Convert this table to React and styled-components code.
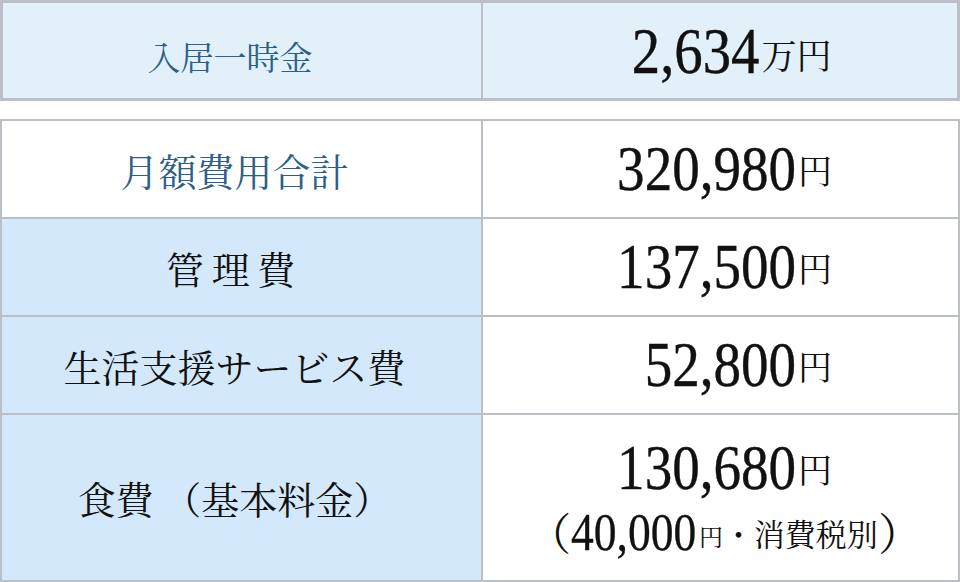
import React from "react";
import styled, { createGlobalStyle } from "styled-components";

const GlobalStyle = createGlobalStyle`
  html, body { margin: 0; padding: 0; background: #ffffff; }
  body {
    font-family: "Liberation Serif", "Noto Serif CJK JP", "Noto Sans CJK JP", serif;
    color: #111111;
  }
`;

const SERIF = `"Liberation Serif", "Times New Roman", "DejaVu Serif", serif`;
const CJK = `"Noto Serif CJK JP", "Noto Sans CJK JP", serif`;

const Page = styled.div`
  width: 960px;
  display: flex;
  flex-direction: column;
  gap: 18px;
`;

const Table = styled.div`
  display: grid;
  grid-template-columns: ${(p) => p.$left}px 1fr;
  gap: 2px;
  padding: ${(p) => p.$frame}px;
  background: #bbbfc6;
`;

const Label = styled.div`
  height: ${(p) => p.$h}px;
  box-sizing: border-box;
  display: flex;
  align-items: center;
  justify-content: center;
  padding: ${(p) => p.$pt || 0}px ${(p) => p.$pr || 14}px 0 0;
  background: ${(p) => p.$bg};
  color: ${(p) => (p.$blue ? "#2d6089" : "#111111")};
  font-family: ${CJK};
  font-size: ${(p) => p.$size || 38}px;
  letter-spacing: ${(p) => p.$ls || 0}em;
  white-space: pre;
`;

const Value = styled.div`
  height: ${(p) => p.$h}px;
  box-sizing: border-box;
  display: flex;
  flex-direction: column;
  align-items: center;
  justify-content: center;
  gap: ${(p) => p.$gap || 0}px;
  background: ${(p) => p.$bg};
`;

const Amount = styled.div`
  width: 223px;
  display: flex;
  justify-content: flex-end;
  align-items: baseline;
  line-height: 1;
  white-space: nowrap;
`;

const Num = styled.span`
  display: inline-block;
  font-family: ${SERIF};
  font-size: ${(p) => p.$size || 64}px;
  -webkit-text-stroke: 0.4px #111111;
  transform: scaleX(0.86);
  transform-origin: right bottom;
  margin-right: 2px;
`;

const Unit = styled.span`
  font-family: ${CJK};
  font-size: ${(p) => p.$size || 34}px;
  position: relative;
  top: ${(p) => -(p.$lift ?? 6)}px;
`;

const Note = styled.div`
  line-height: 1;
  white-space: nowrap;
  display: flex;
  align-items: baseline;
  margin-left: 8px;
`;

const Paren = styled.span`
  font-family: ${CJK};
  font-size: 44px;
`;

const NoteNum = styled.span`
  display: inline-block;
  font-family: ${SERIF};
  font-size: 53px;
  -webkit-text-stroke: 0.3px #111111;
  transform: scaleX(0.86);
  transform-origin: left bottom;
  margin-right: -18px;
`;

const NoteText = styled.span`
  font-family: ${CJK};
  font-size: ${(p) => p.$size}px;
  position: relative;
  top: -4px;
`;

const TOP = "#e2f0fa";
const BLUE = "#d3e9fb";
const WHITE = "#ffffff";

const rows = [
  { label: "月額費用合計", blue: true, lbg: WHITE, num: "320,980" },
  { label: "管理費", ls: 0.2, lbg: BLUE, num: "137,500" },
  { label: "生活支援サービス費", lbg: BLUE, num: "52,800" },
];

export default function App() {
  return (
    <>
      <GlobalStyle />
      <Page>
        <Table $left={478} $frame={3}>
          <Label $h={95} $bg={TOP} $blue $size={33} $pt={10} $pr={24}>
            入居一時金
          </Label>
          <Value $h={95} $bg={TOP}>
            <Amount>
              <Num $size={66}>2,634</Num>
              <Unit $size={35} $lift={4}>万円</Unit>
            </Amount>
          </Value>
        </Table>

        <Table $left={479} $frame={2}>
          {rows.map((r) => (
            <React.Fragment key={r.label}>
              <Label $h={96} $bg={r.lbg} $blue={r.blue} $ls={r.ls}>
                {r.label}
              </Label>
              <Value $h={96} $bg={WHITE}>
                <Amount>
                  <Num>{r.num}</Num>
                  <Unit>円</Unit>
                </Amount>
              </Value>
            </React.Fragment>
          ))}
          <Label $h={165} $bg={BLUE}>
            食費 （基本料金）
          </Label>
          <Value $h={165} $bg={WHITE} $gap={6}>
            <Amount>
              <Num>130,680</Num>
              <Unit>円</Unit>
            </Amount>
            <Note>
              <Paren>（</Paren>
              <NoteNum>40,000</NoteNum>
              <NoteText $size={24}>円</NoteText>
              <NoteText $size={31}>・消費税別</NoteText>
              <Paren>）</Paren>
            </Note>
          </Value>
        </Table>
      </Page>
    </>
  );
}
